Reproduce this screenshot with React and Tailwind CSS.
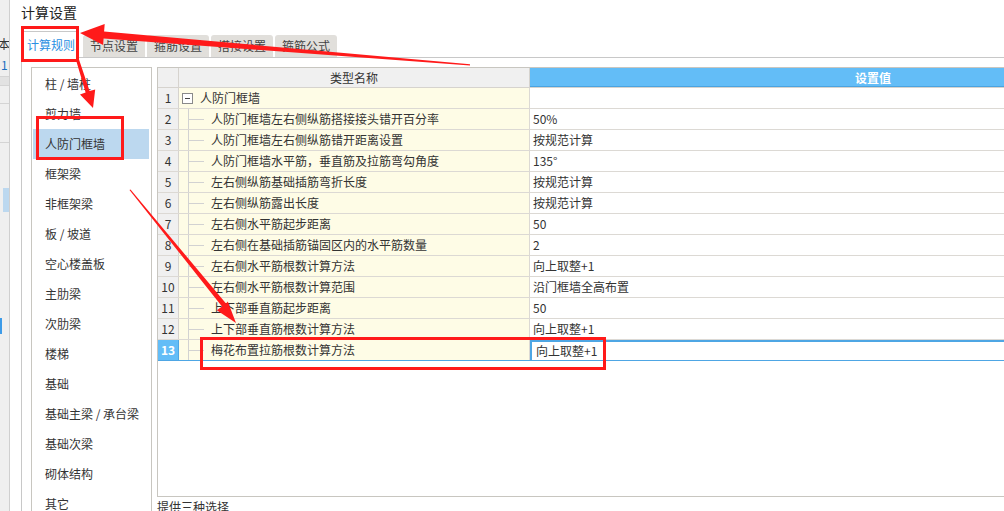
const categories = [
  "柱 / 墙柱",
  "剪力墙",
  "人防门框墙",
  "框架梁",
  "非框架梁",
  "板 / 坡道",
  "空心楼盖板",
  "主肋梁",
  "次肋梁",
  "楼梯",
  "基础",
  "基础主梁 / 承台梁",
  "基础次梁",
  "砌体结构",
  "其它",
];

const rows = [
  { name: "人防门框墙左右侧纵筋搭接接头错开百分率", value: "50%" },
  { name: "人防门框墙左右侧纵筋错开距离设置", value: "按规范计算" },
  { name: "人防门框墙水平筋，垂直筋及拉筋弯勾角度", value: "135°" },
  { name: "左右侧纵筋基础插筋弯折长度", value: "按规范计算" },
  { name: "左右侧纵筋露出长度", value: "按规范计算" },
  { name: "左右侧水平筋起步距离", value: "50" },
  { name: "左右侧在基础插筋锚固区内的水平筋数量", value: "2" },
  { name: "左右侧水平筋根数计算方法", value: "向上取整+1" },
  { name: "左右侧水平筋根数计算范围", value: "沿门框墙全高布置" },
  { name: "上下部垂直筋起步距离", value: "50" },
  { name: "上下部垂直筋根数计算方法", value: "向上取整+1" },
  { name: "梅花布置拉筋根数计算方法", value: "向上取整+1" },
];

const tabs = ["节点设置", "箍筋设置", "搭接设置", "箍筋公式"];

const Annotations = () => (
  <svg
    className="absolute inset-0 pointer-events-none"
    width="1004"
    height="511"
    viewBox="0 0 1004 511"
  >
    <g fill="none" stroke="#ff1a1a" strokeWidth="3">
      <rect x="22.5" y="27.5" width="55" height="33" />
      <rect x="37.5" y="117.5" width="85" height="41" />
      <rect x="201.5" y="338.5" width="403" height="30" />
    </g>
    <g fill="#ff1a1a">
      {/* arrow to tab */}
      <polygon points="80,33 104.7,24 104.1,31.5 470,64.3 470,65.6 103.6,38.5 103.1,45" />
      {/* arrow to 剪力墙 */}
      <polygon points="76,60 79,59.5 89.6,91 95.2,89.4 93,108 80,94.4 85.6,92.5" />
      {/* arrow to row 12 */}
      <polygon points="129.5,190 130.5,189.5 226,303.5 227.8,301.4 236,323 216.8,310.2 222,306.5" />
    </g>
  </svg>
);

const App = () => {
  return (
    <div className="relative w-[1004px] h-[511px] overflow-hidden bg-white flex font-['Noto_Sans_CJK_SC',sans-serif] text-[#333]">

      {/* background window edge */}
      <div className="w-[10px] shrink-0 bg-[#efefef] border-r border-[#cfcfcf] flex flex-col overflow-hidden text-[12px]">
        <div className="h-[34px] shrink-0" />
        <div className="h-[20px] shrink-0 leading-[20px] -ml-[2px]">本</div>
        <div className="h-[22px] shrink-0 leading-[22px] pl-[1px] text-[#1a6fc0]">1</div>
        <div className="h-[10px] shrink-0 bg-[#e2e2e2] border-y border-[#d4d4d4]" />
        <div className="h-[18px] shrink-0 border-b border-[#d4d4d4]" />
        <div className="h-[39px] shrink-0 border-b border-[#d4d4d4]" />
        <div className="h-[45px] shrink-0" />
        <div className="h-[24px] shrink-0 bg-[#bcd8ef] ml-[3px]" />
        <div className="h-[106px] shrink-0" />
        <div className="h-[16px] shrink-0 w-[2px] bg-[#3d9be8]" />
      </div>

      {/* dialog */}
      <div className="flex-1 min-w-0 flex flex-col">
        <div className="h-[27px] shrink-0 pl-[11px] pt-[2px] text-[14px] leading-[20px] text-[#222]">
          计算设置
        </div>

        {/* tabs */}
        <div className="h-[31px] shrink-0 flex items-end pl-[11px]">
          <div className="h-[27px] w-[58px] shrink-0 bg-white border-l border-t border-r border-[#c8c8c8] pl-[5px] text-[12px] leading-[26px] text-[#2a8fe2]">
            计算规则
          </div>
          <div className="flex-1 h-full flex items-end gap-[2px] pl-[4px] border-b border-[#c8c8c8]">
            {tabs.map((t) => (
              <div
                key={t}
                className="h-[22px] px-[7px] bg-[#e1dfdb] rounded-t-[3px] text-[12px] leading-[22px] text-[#444]"
              >
                {t}
              </div>
            ))}
          </div>
        </div>

        {/* content */}
        <div className="flex-1 shrink-0 flex gap-[5px] ml-[11px] border-l border-[#c8c8c8] pl-[9px] pt-[9px]">

          {/* category list */}
          <div className="w-[121px] shrink-0 h-[460px] border border-[#c8c6c0] pt-[1px] flex flex-col">
            {categories.map((c) => (
              <div
                key={c}
                className={
                  c === "人防门框墙"
                    ? "h-[30px] shrink-0 ml-[1px] mr-[2px] pl-[12px] bg-[#bcd8ef] text-[12px] leading-[30px]"
                    : "h-[30px] shrink-0 ml-[1px] mr-[2px] pl-[12px] text-[12px] leading-[30px]"
                }
              >
                {c}
              </div>
            ))}
          </div>

          {/* grid */}
          <div className="w-[1060px] shrink-0 flex flex-col">
            <div className="h-[430px] shrink-0 border border-[#c8c6c0] flex flex-col text-[12px]">

              {/* header */}
              <div className="h-[20px] shrink-0 flex border-b border-[#d6d3ce]">
                <div className="w-[21px] bg-[#f0f0f0] border-r border-[#d6d3ce]" />
                <div className="w-[351px] bg-[#f0f0f0] border-r border-[#d6d3ce] text-center leading-[19px]">
                  类型名称
                </div>
                <div className="flex-1 bg-[#63bdf7] border-b border-[#4aa3e0] text-center text-white font-bold leading-[19px]">
                  设置值
                </div>
              </div>

              {/* row 1 */}
              <div className="h-[21px] shrink-0 flex border-b border-[#dcd9d4]">
                <div className="w-[21px] bg-[#f0f0f0] border-r border-[#d6d3ce] text-center leading-[20px]">
                  1
                </div>
                <div className="w-[351px] bg-[#fefce6] border-r border-[#dcd9d4] flex items-center">
                  <div className="ml-[3px] w-[11px] h-[11px] border border-[#8a8a8a] bg-white flex items-center justify-center">
                    <div className="w-[5px] border-t border-[#444]" />
                  </div>
                  <span className="ml-[7px] leading-[20px]">人防门框墙</span>
                </div>
                <div className="flex-1 bg-white" />
              </div>

              {rows.map((r, i) => {
                const n = i + 2;
                const active = n === 13;
                return (
                  <div
                    key={n}
                    className={
                      active
                        ? "h-[21px] shrink-0 flex border-b border-[#4ea6e4]"
                        : "h-[21px] shrink-0 flex border-b border-[#dcd9d4]"
                    }
                  >
                    <div
                      className={
                        active
                          ? "w-[21px] bg-[#63bdf7] border-r border-[#4ea6e4] text-center leading-[20px] text-white font-bold"
                          : "w-[21px] bg-[#f0f0f0] border-r border-[#d6d3ce] text-center leading-[20px]"
                      }
                    >
                      {n}
                    </div>
                    <div className="w-[351px] bg-[#fefce6] border-r border-[#dcd9d4] flex items-stretch">
                      <div className="ml-[9px] w-[16px] border-l border-[#d2d2d2] flex items-center">
                        <div className="w-full border-t border-[#d2d2d2]" />
                      </div>
                      <span className="ml-[7px] leading-[20px]">{r.name}</span>
                    </div>
                    {active ? (
                      <div className="flex-1 bg-white border-2 border-b-0 border-[#4ea6e4] pl-[4px] leading-[18px]">
                        {r.value}
                      </div>
                    ) : (
                      <div className="flex-1 bg-white pl-[3px] leading-[20px]">
                        {r.value}
                      </div>
                    )}
                  </div>
                );
              })}

              <div className="flex-1 bg-white" />
            </div>

            <div className="mt-[2px] text-[12px] leading-[16px]">提供三种选择</div>
          </div>
        </div>
      </div>

      <Annotations />
    </div>
  );
};

export default App;
